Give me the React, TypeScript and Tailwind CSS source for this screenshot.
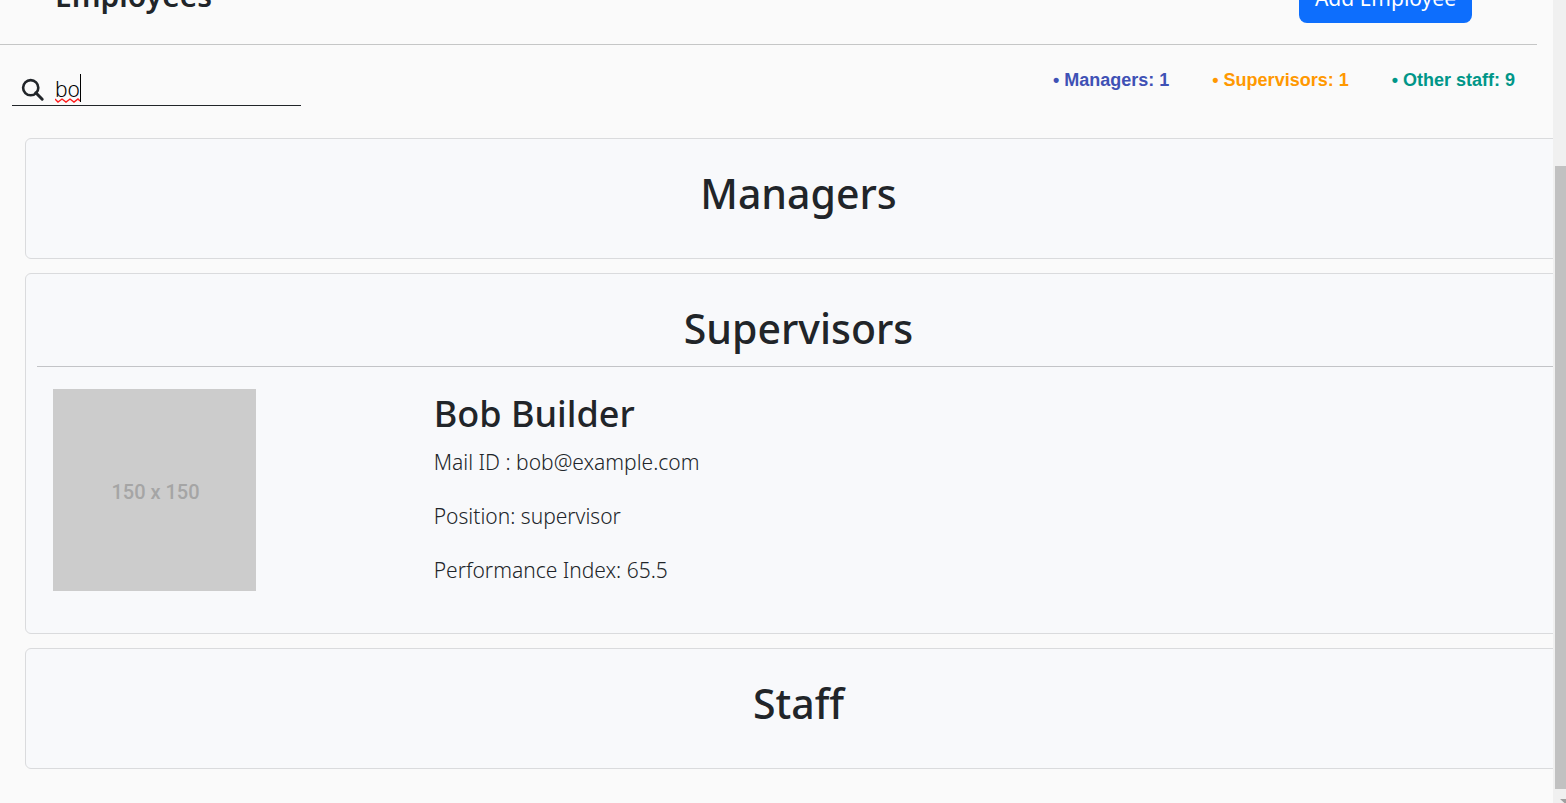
import { useState, type ReactNode } from "react";

type Employee = {
  name: string;
  email: string;
  position: string;
  performance: number;
};

const supervisors: Employee[] = [
  { name: "Bob Builder", email: "bob@example.com", position: "supervisor", performance: 65.5 },
];

function Header() {
  return (
    <header className="mr-4 flex h-[45px] items-end justify-between overflow-hidden border-b border-[#c5c6c6] pr-[65px] pb-[21px] pl-[55px]">
      <h1 className="pb-[10px] text-[30px] leading-[34px] font-semibold">Employees</h1>
      <button
        type="button"
        className="shrink-0 rounded-lg bg-[#0d6efd] px-4 py-[9px] text-[21px] leading-8 text-white"
      >
        Add Employee
      </button>
    </header>
  );
}

function SearchBox() {
  const [query, setQuery] = useState("bo");
  return (
    <div className="relative ml-3 flex h-8 w-[289px] items-center border-b border-[#212529]">
      <label htmlFor="search" aria-label="Search employees" className="pl-[9px]">
        <svg className="size-6" viewBox="0 0 24 24" fill="none" stroke="#212529">
          <circle cx="9.7" cy="9.7" r="7.6" strokeWidth="2.6" />
          <path d="M14.8 14.8l6.4 6.4" strokeWidth="3" strokeLinecap="round" />
        </svg>
      </label>
      <input
        id="search"
        type="text"
        value={query}
        spellCheck={false}
        onChange={(event) => setQuery(event.target.value)}
        className="ml-[10px] w-full min-w-0 bg-transparent pb-0.5 text-[21px] leading-7 font-light text-black outline-none"
      />
      {query === "bo" && (
        <>
          <span className="absolute top-0 left-[68px] h-7 w-px bg-black" />
          <svg className="absolute top-6 left-[43px] h-[5px] w-[25px]" viewBox="0 0 25 5" fill="none">
            <path
              d="M0 1l3 3 4-3 4 3 4-3 4 3 4-3 2 2"
              stroke="#ff1a1a"
              strokeWidth="1.4"
            />
          </svg>
        </>
      )}
    </div>
  );
}

function Counts() {
  return (
    <ul className="mr-[38px] flex gap-[43px] font-['Liberation_Sans',Arial,sans-serif] text-[18px] leading-6 font-bold">
      <li className="text-[#3f51b5]">• Managers: 1</li>
      <li className="text-[#ff9800]">• Supervisors: 1</li>
      <li className="text-[#009688]">• Other staff: 9</li>
    </ul>
  );
}

function Group({ title, children }: { title: string; children?: ReactNode }) {
  return (
    <section className="rounded-md border border-[#dadbdd] bg-[#f8f9fb] px-[11px] pt-7">
      <h2 className="text-center text-[41px] leading-[52px] font-medium">{title}</h2>
      {children ?? <div className="h-[39px]" />}
    </section>
  );
}

function EmployeeRow({ employee }: { employee: Employee }) {
  return (
    <article className="mt-3 grid grid-cols-12 border-t border-[#c3c4c7] pt-[22px] pb-[42px]">
      <div className="col-span-3 px-4">
        <div className="flex h-[202px] w-[203px] items-center justify-center bg-[#cccccc] pt-1 pl-0.5 font-['Roboto',sans-serif] text-[20px] font-medium text-[#a5a5a5]">
          150 x 150
        </div>
      </div>
      <div className="col-span-9 px-4">
        <h3 className="pt-px text-[36px] leading-[48px] font-medium">{employee.name}</h3>
        <div className="mt-2 flex flex-col gap-[22px] text-[21px] leading-8 font-light">
          <p>Mail ID : {employee.email}</p>
          <p>Position: {employee.position}</p>
          <p>Performance Index: {employee.performance}</p>
        </div>
      </div>
    </article>
  );
}

function ScrollTrack() {
  return (
    <div aria-hidden="true" className="flex w-[13px] shrink-0 flex-col overflow-hidden bg-[#f0f0f0] pt-[166px] pl-0.5">
      <div className="flex-1 bg-[#c1c1c1]" />
      <svg className="ml-[5px] h-[14px] w-[10px] shrink-0" viewBox="0 0 10 14">
        <path d="M0 10h10v9z" fill="#a0a0a0" />
      </svg>
    </div>
  );
}

export default function App() {
  return (
    <div className="flex h-screen bg-[#fafafa] font-['Noto_Sans','Segoe_UI',sans-serif] text-[#212529]">
      <main className="min-w-0 flex-1 overflow-hidden">
        <Header />
        <div className="flex items-start justify-between pt-[23px]">
          <div className="pt-[6px]">
            <SearchBox />
          </div>
          <Counts />
        </div>
        <div className="mt-8 -mr-[19px] ml-[25px] flex flex-col gap-[14px]">
          <Group title="Managers" />
          <Group title="Supervisors">
            {supervisors.map((employee) => (
              <EmployeeRow key={employee.email} employee={employee} />
            ))}
          </Group>
          <Group title="Staff" />
        </div>
      </main>
      <ScrollTrack />
    </div>
  );
}
